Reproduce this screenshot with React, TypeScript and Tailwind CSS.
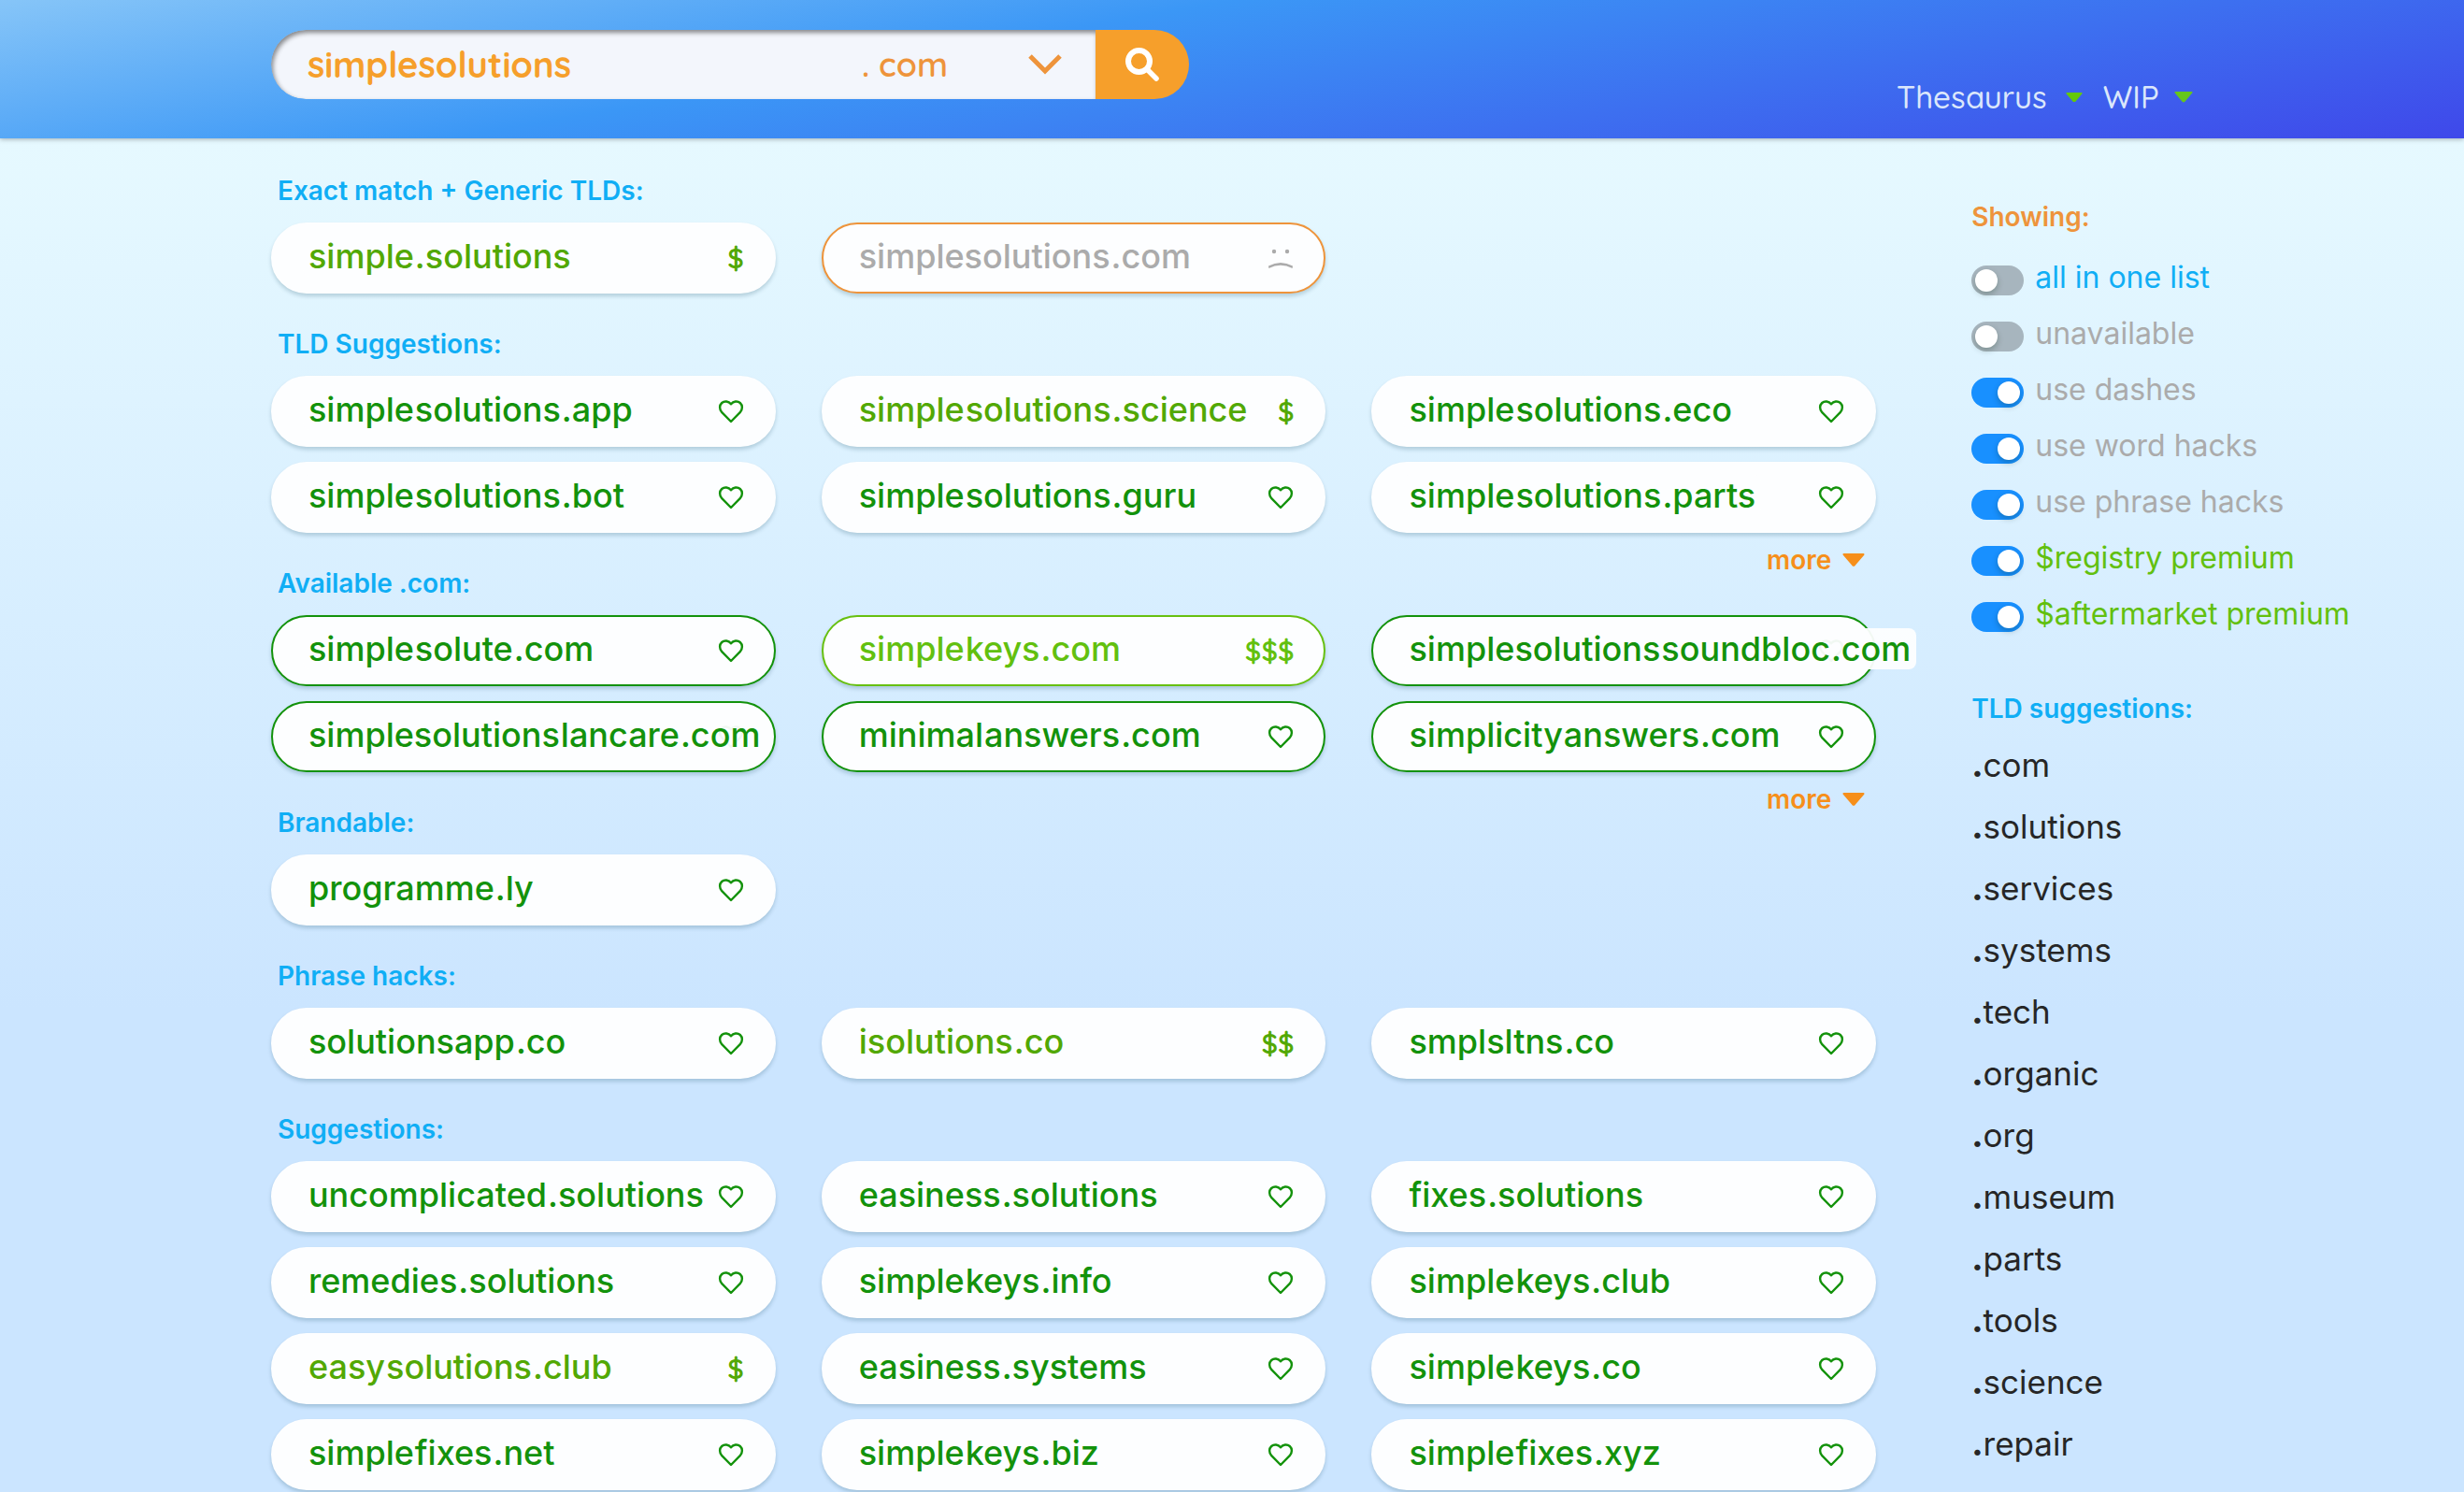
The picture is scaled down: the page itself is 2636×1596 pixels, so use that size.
import React from "react";

type Tone = "free" | "premium" | "bright" | "taken";
type Mark = "heart" | "sad" | "$" | "$$" | "$$$";
type Domain = { parts: string[]; tone?: Tone; mark?: Mark; outline?: "green" | "lime" | "orange" };
type Section = { title: string; items: Domain[]; more?: boolean };

const d = (text: string, extra: Partial<Domain> = {}): Domain => ({ parts: text.split("|"), ...extra });

const SECTIONS: Section[] = [
  {
    title: "Exact match + Generic TLDs:",
    items: [
      d("simple|.solutions", { tone: "premium", mark: "$" }),
      d("simplesolutions|.com", { tone: "taken", mark: "sad", outline: "orange" }),
    ],
  },
  {
    title: "TLD Suggestions:",
    more: true,
    items: [
      d("simple|solutions|.app"),
      d("simple|solutions|.science", { tone: "premium", mark: "$" }),
      d("simple|solutions|.eco"),
      d("simple|solutions|.bot"),
      d("simple|solutions|.guru"),
      d("simple|solutions|.parts"),
    ],
  },
  {
    title: "Available .com:",
    more: true,
    items: [
      d("simple|solute|.com", { outline: "green" }),
      d("simple|keys|.com", { tone: "bright", mark: "$$$", outline: "lime" }),
      d("simplesolutions|soundbloc|.com", { outline: "green" }),
      d("simplesolutions|lancare|.com", { outline: "green" }),
      d("minimal|answers|.com", { outline: "green" }),
      d("simplicity|answers|.com", { outline: "green" }),
    ],
  },
  { title: "Brandable:", items: [d("programme|.ly")] },
  {
    title: "Phrase hacks:",
    items: [d("solutionsapp|.co"), d("isolutions|.co", { tone: "premium", mark: "$$" }), d("smplsltns|.co")],
  },
  {
    title: "Suggestions:",
    items: [
      d("uncomplicated|.solutions"),
      d("easiness|.solutions"),
      d("fixes|.solutions"),
      d("remedies|.solutions"),
      d("simple|keys|.info"),
      d("simple|keys|.club"),
      d("easy|solutions|.club", { tone: "premium", mark: "$" }),
      d("easiness|.systems"),
      d("simple|keys|.co"),
      d("simple|fixes|.net"),
      d("simple|keys|.biz"),
      d("simple|fixes|.xyz"),
    ],
  },
];

const TONE: Record<Tone, string> = {
  free: "text-[#13920b]",
  premium: "text-[#52a804]",
  bright: "text-[#62c00f]",
  taken: "text-[#ababab]",
};

const OUTLINE = {
  none: "border-[#fdfeff]",
  green: "border-[#13920b]",
  lime: "border-[#67c010]",
  orange: "border-[#ee943b]",
};

const FILTERS = [
  { label: "all in one list", on: false, color: "text-[#10aef5]" },
  { label: "unavailable", on: false, color: "text-[#ababab]" },
  { label: "use dashes", on: true, color: "text-[#ababab]" },
  { label: "use word hacks", on: true, color: "text-[#ababab]" },
  { label: "use phrase hacks", on: true, color: "text-[#ababab]" },
  { label: "$registry premium", on: true, color: "text-[#62c00f]" },
  { label: "$aftermarket premium", on: true, color: "text-[#62c00f]" },
];

const TLDS = ["com", "solutions", "services", "systems", "tech", "organic", "org", "museum", "parts", "tools", "science", "repair"];

function Caret({ className }: { className: string }) {
  return (
    <svg viewBox="0 0 24 14" className={className} fill="currentColor" stroke="currentColor" strokeWidth="2" strokeLinejoin="round" aria-hidden="true">
      <path d="M1.500 1h21L13 12.200Q12 13.200 11 12.200Z" />
    </svg>
  );
}

function Heart() {
  return (
    <svg viewBox="0 0 28 28" className="size-7" fill="none" stroke="currentColor" strokeWidth="2.400" strokeLinejoin="round" aria-hidden="true">
      <path d="M14 25 4.300 15.200C1.300 12 1.500 7.400 4.200 5 7.100 2.500 11.400 3.100 14 6.300 16.600 3.100 20.900 2.500 23.800 5 26.500 7.400 26.700 12 23.700 15.200Z" />
    </svg>
  );
}

function Sad() {
  return (
    <svg viewBox="0 0 28 28" className="size-7" fill="currentColor" aria-hidden="true">
      <path d="M1 22.500Q14 15.500 27 22.500L26.600 25Q14 18.500 1.400 25Z" />
      <circle cx="7" cy="7" r="2.200" />
      <circle cx="21" cy="7" r="2.200" />
    </svg>
  );
}

function MarkIcon({ mark }: { mark: Mark }) {
  if (mark === "heart") return <Heart />;
  if (mark === "sad") return <Sad />;
  return <span className="font-['Quicksand','Lato',sans-serif] text-[30px] leading-8 font-semibold">{mark}</span>;
}

function Pill({ item }: { item: Domain }) {
  return (
    <li className="min-w-0">
      <button
        type="button"
        className={`relative flex h-[76px] w-full items-center rounded-full border-2 bg-[#fdfeff] px-8 pb-1 shadow-[0_3px_4px_rgba(0,60,80,0.2)] ${OUTLINE[item.outline ?? "none"]} ${TONE[item.tone ?? "free"]}`}
      >
        <span className="absolute inset-y-0 right-8 flex items-center">
          <MarkIcon mark={item.mark ?? "heart"} />
        </span>
        <span className="relative flex gap-px rounded-lg bg-[#fdfeff]/95 px-[6px] py-[2px] text-[36px] leading-10 font-medium whitespace-nowrap">
          {item.parts.map((part, i) => (
            <span key={i}>{part}</span>
          ))}
        </span>
      </button>
    </li>
  );
}

function Toggle({ label, on, color }: { label: string; on: boolean; color: string }) {
  return (
    <label className={`flex h-[60px] items-center gap-3 ${color}`}>
      <input
        type="checkbox"
        role="switch"
        defaultChecked={on}
        className="flex h-8 w-14 shrink-0 appearance-none items-center rounded-full bg-[#a7b5be] px-1 before:size-6 before:rounded-full before:bg-white before:shadow-[0_3px_6px_rgba(0,35,11,0.25)] checked:justify-end checked:bg-[#1890ff]"
      />
      <span className="pb-[6px] text-[32px] leading-10 whitespace-nowrap">{label}</span>
    </label>
  );
}

export default function App() {
  return (
    <div className="min-h-screen overflow-hidden bg-[linear-gradient(180deg,#e6f9ff_148px,#cbe5ff_1080px)] font-['Inter','Liberation_Sans',sans-serif]">
      <header className="relative flex h-[148px] items-start bg-[linear-gradient(170deg,#86c5f8_0%,#3b97f6_38%,#3f48ea_100%)] pl-[11%] shadow-[0_1px_5px_rgba(0,0,0,0.3)]">
        <form className="mt-8 flex h-[74px] w-[982px] overflow-hidden rounded-full font-['Quicksand','Lato',sans-serif]">
          <div className="flex grow items-center rounded-l-full bg-[#f3f6fc] pl-[39px] shadow-[inset_2px_3px_5px_rgba(0,0,0,0.45)]">
            <input aria-label="Search" defaultValue="simplesolutions" className="w-[593px] bg-transparent text-[38px] font-bold text-[#f69f2b] outline-none" />
            <select aria-label="Extension" className="w-[178px] appearance-none bg-transparent text-[36px] font-semibold text-[#ee943b] outline-none">
              <option>. com</option>
            </select>
            <svg viewBox="0 0 36 24" className="w-9" fill="none" stroke="#ee943b" strokeWidth="5" aria-hidden="true">
              <path d="m2 3 16 16L34 3" />
            </svg>
          </div>
          <button type="submit" aria-label="Search" className="flex w-[100px] items-center justify-center bg-[#f69f2b] text-white">
            <svg viewBox="0 0 36 36" className="size-9" fill="none" stroke="currentColor" strokeWidth="6" aria-hidden="true">
              <circle cx="14.500" cy="14.500" r="11.500" />
              <path d="M23.500 23.500 33 33" strokeLinecap="round" strokeWidth="5.500" />
            </svg>
          </button>
        </form>
        <nav className="mt-[84px] ml-auto flex w-[607px] items-center gap-[22px] font-['Quicksand','Lato',sans-serif] text-[33px] leading-10 font-medium text-[#dbe7fb]">
          <button type="button" className="flex items-center gap-5">
            Thesaurus <Caret className="w-[18px] text-[#65c80a]" />
          </button>
          <button type="button" className="flex items-center gap-4">
            WIP <Caret className="w-5 text-[#66c61c]" />
          </button>
        </nav>
      </header>

      <div className="flex pl-[11%]">
        <main className="w-[73.2%] pt-[2px]">
          {SECTIONS.map((section) => (
            <section key={section.title}>
              <h2 className="pt-[35px] pb-[15px] pl-[7px] text-[28px] leading-[38px] font-semibold text-[#10aef5]">{section.title}</h2>
              <ul className="grid grid-cols-3 gap-x-[49px] gap-y-4">
                {section.items.map((item) => (
                  <Pill key={item.parts.join("")} item={item} />
                ))}
              </ul>
              {section.more && (
                <button type="button" className="mt-[10px] mr-3 -mb-12 ml-auto flex h-[38px] items-center gap-3 text-[28px] leading-[38px] font-semibold text-[#f68f1a]">
                  more <Caret className="w-6" />
                </button>
              )}
            </section>
          ))}
        </main>
        <aside className="min-w-0 flex-1 pt-16 pl-[102px]">
          <h2 className="text-[28px] leading-10 font-semibold text-[#ee943b]">Showing:</h2>
          <div className="mt-[18px]">
            {FILTERS.map((filter) => (
              <Toggle key={filter.label} {...filter} />
            ))}
          </div>
          <h2 className="mt-12 text-[28px] leading-10 font-semibold text-[#10aef5]">TLD suggestions:</h2>
          <ul className="mt-[7px] text-[35px] leading-[66px] text-[#262626]">
            {TLDS.map((tld) => (
              <li key={tld}>
                <a href={`#${tld}`}>
                  <span className="font-extrabold">.</span>
                  {tld}
                </a>
              </li>
            ))}
          </ul>
        </aside>
      </div>
    </div>
  );
}
